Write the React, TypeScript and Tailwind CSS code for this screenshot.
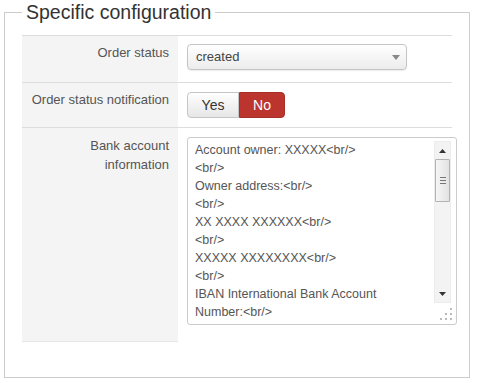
export default function App() {
  const lines = [
    "Account owner: XXXXX<br/>",
    "<br/>",
    "Owner address:<br/>",
    "<br/>",
    "XX XXXX XXXXXX<br/>",
    "<br/>",
    "XXXXX XXXXXXXX<br/>",
    "<br/>",
    "IBAN International Bank Account",
    "Number:<br/>",
  ];
  return (
    <div className="w-[477px] h-[383px] bg-white pl-[4px] font-['Liberation_Sans',Arial,sans-serif]">
      <fieldset className="w-[466px] h-[378px] border border-[#cccccc]">
        <legend className="ml-[17px] px-[4px] text-[19.5px] leading-[24px] text-[#333333]">
          Specific configuration
        </legend>
        <div className="ml-[17px] mt-[11px] w-[430px]">
          {/* Row 1 */}
          <div className="flex h-[47px] border-t border-[#dddddd]">
            <div className="w-[156px] shrink-0 bg-[#f4f4f4] pr-[9px] pt-[8px] text-right text-[13px] leading-[18px] text-[#555555]">
              Order status
            </div>
            <div className="shrink-0 pl-[9px] pt-[8px]">
              <div className="flex w-[220px] h-[26px] items-center justify-between rounded-[4px] border border-[#c5c5c5] bg-linear-to-b from-white to-[#ececec] pl-[8px] pr-[6px] text-[13px] text-[#444444] shadow-[0_1px_1px_rgba(0,0,0,0.08)]">
                <span>created</span>
                <svg width="8" height="5" viewBox="0 0 8 5">
                  <path d="M0 0 L8 0 L4 5 Z" fill="#888888" />
                </svg>
              </div>
            </div>
          </div>
          {/* Row 2 */}
          <div className="flex h-[45px] border-t border-[#dddddd]">
            <div className="w-[156px] shrink-0 bg-[#f4f4f4] pr-[9px] pt-[8px] text-right text-[13px] leading-[18px] text-[#555555]">
              Order status notification
            </div>
            <div className="shrink-0 pl-[9px] pt-[9px]">
              <div className="flex h-[26px]">
                <div className="flex w-[52px] items-center justify-center rounded-l-[4px] border border-[#c5c5c5] bg-linear-to-b from-white to-[#e6e6e6] text-[14px] text-[#333333]">
                  Yes
                </div>
                <div className="flex w-[46px] items-center justify-center rounded-r-[4px] border border-[#a8302a] bg-[#bb342e] text-[14px] text-white">
                  No
                </div>
              </div>
            </div>
          </div>
          {/* Row 3 */}
          <div className="flex border-t border-[#dddddd]">
            <div className="w-[156px] h-[214px] shrink-0 bg-[#f4f4f4] border-b border-[#e6e6e6] pr-[9px] pt-[8px] text-right text-[13px] leading-[19px] text-[#555555]">
              Bank account
              <br />
              information
            </div>
            <div className="shrink-0 pl-[9px] pt-[9px]">
              <div className="relative flex w-[270px] h-[188px] rounded-[3px] border border-[#cccccc] bg-white">
                <div className="flex-1 overflow-hidden pl-[7px] pt-[3px] text-[12.5px] leading-[18px] text-[#555555]">
                  {lines.map((l, i) => (
                    <div key={i} className="whitespace-pre">
                      {l}
                    </div>
                  ))}
                </div>
                <div className="mt-[3px] mr-[5px] flex h-[162px] w-[17px] shrink-0 flex-col border border-[#ececec] bg-[#f3f3f3]">
                  <div className="flex h-[17px] items-center justify-center">
                    <svg width="7" height="4" viewBox="0 0 7 4">
                      <path d="M0 4 L3.5 0 L7 4 Z" fill="#333333" />
                    </svg>
                  </div>
                  <div className="flex h-[43px] w-[15px] flex-col items-center justify-center gap-[2px] rounded-[1px] border border-[#b3b3b3] bg-linear-to-r from-[#f6f6f6] to-[#e2e2e2]">
                    <div className="h-[1px] w-[6px] bg-[#777777]" />
                    <div className="h-[1px] w-[6px] bg-[#777777]" />
                    <div className="h-[1px] w-[6px] bg-[#777777]" />
                  </div>
                  <div className="flex-1" />
                  <div className="flex h-[17px] items-center justify-center">
                    <svg width="7" height="4" viewBox="0 0 7 4">
                      <path d="M0 0 L7 0 L3.5 4 Z" fill="#333333" />
                    </svg>
                  </div>
                </div>
                <svg
                  className="absolute bottom-[4px] right-[4px]"
                  width="12"
                  height="12"
                  viewBox="0 0 12 12"
                >
                  <rect x="10" y="0" width="2" height="2" fill="#bbbbbb" />
                  <rect x="5" y="5" width="2" height="2" fill="#bbbbbb" />
                  <rect x="10" y="5" width="2" height="2" fill="#bbbbbb" />
                  <rect x="0" y="10" width="2" height="2" fill="#bbbbbb" />
                  <rect x="5" y="10" width="2" height="2" fill="#bbbbbb" />
                  <rect x="10" y="10" width="2" height="2" fill="#bbbbbb" />
                </svg>
              </div>
            </div>
          </div>
        </div>
      </fieldset>
    </div>
  );
}
